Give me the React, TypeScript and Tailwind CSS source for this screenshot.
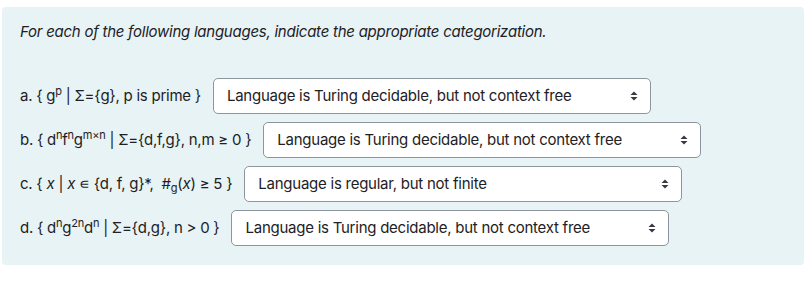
import React from 'react';

type Row = {
  id: string;
  label: React.ReactNode;
  value: string;
};

const OPTIONS = [
  'Choose...',
  'Language is regular, but not finite',
  'Language is context free, but not regular',
  'Language is Turing decidable, but not context free',
];

const rows: Row[] = [
  {
    id: 'a',
    label: (
      <>
        a. {'{'} g<sup className="text-[11px] leading-none">p</sup> | Σ={'{'}g{'}'}, p is prime {'}'}
      </>
    ),
    value: 'Language is Turing decidable, but not context free',
  },
  {
    id: 'b',
    label: (
      <>
        b. {'{'} d<sup className="text-[11px] leading-none">n</sup>f<sup className="text-[11px] leading-none">n</sup>g
        <sup className="text-[11px] leading-none">m×n</sup> | Σ={'{'}d,f,g{'}'}, n,m ≥ 0 {'}'}
      </>
    ),
    value: 'Language is Turing decidable, but not context free',
  },
  {
    id: 'c',
    label: (
      <>
        c. {'{'} <i>x</i> | <i>x</i> ∊ {'{'}d, f, g{'}'}*,&nbsp; #<sub className="text-[11px] leading-none">g</sub>(<i>x</i>) ≥ 5 {'}'}
      </>
    ),
    value: 'Language is regular, but not finite',
  },
  {
    id: 'd',
    label: (
      <>
        d. {'{'} d<sup className="text-[11px] leading-none">n</sup>g<sup className="text-[11px] leading-none">2n</sup>d
        <sup className="text-[11px] leading-none">n</sup> | Σ={'{'}d,g{'}'}, n &gt; 0 {'}'}
      </>
    ),
    value: 'Language is Turing decidable, but not context free',
  },
];

function SelectArrows() {
  return (
    <svg width="8" height="10" viewBox="0 0 8 10" className="pointer-events-none absolute right-[13px] top-1/2 -translate-y-1/2">
      <path d="M4 0.5 L7.5 4 L0.5 4 Z" fill="#343a40" />
      <path d="M4 9.5 L7.5 6 L0.5 6 Z" fill="#343a40" />
    </svg>
  );
}

function AnswerSelect({ value }: { value: string }) {
  const [v, setV] = React.useState(value);
  return (
    <div className="relative w-[438px]">
      <select
        value={v}
        onChange={(e) => setV(e.target.value)}
        className="h-[36px] w-full appearance-none rounded-[5px] border border-[#8f959e] bg-white pl-[13px] pr-8 text-[15px] tracking-[-0.25px] text-[#1d2125] outline-none"
      >
        {OPTIONS.map((o) => (
          <option key={o} value={o}>
            {o}
          </option>
        ))}
      </select>
      <SelectArrows />
    </div>
  );
}

export default function App() {
  return (
    <div className="bg-white px-[2px] pt-[7px] pb-[21px] font-['Inter','Liberation_Sans',sans-serif] text-[15px] tracking-[-0.25px] text-[#1d2125]">
      <div className="rounded-[4px] bg-[#e7f3f5] px-[18px] pt-[14px] pb-[19px]">
        <p className="italic leading-[22px]">
          For each of the following languages, indicate the appropriate categorization.
        </p>
        <div className="mt-[35px] flex flex-col gap-[8px]">
          {rows.map((row) => (
            <div key={row.id} className="flex items-center gap-3">
              <span className="whitespace-nowrap">{row.label}</span>
              <AnswerSelect value={row.value} />
            </div>
          ))}
        </div>
      </div>
    </div>
  );
}
